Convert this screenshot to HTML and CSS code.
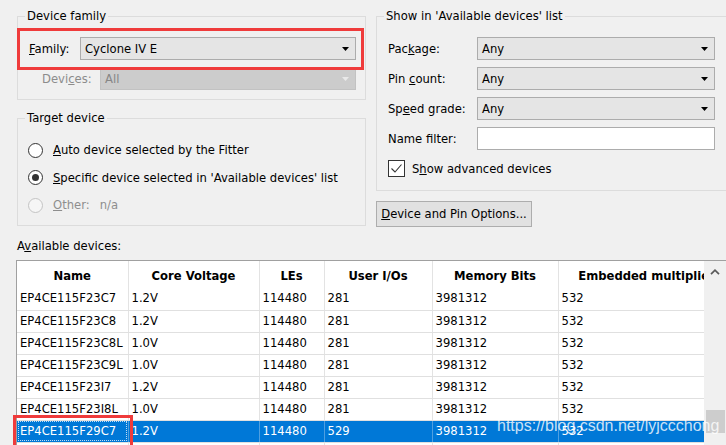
FILE: index.html
```html
<!DOCTYPE html>
<html>
<head>
<meta charset="utf-8">
<title>Device</title>
<link rel="stylesheet" href="styles.css">
</head>
<body>
<div class="page">
  <div class="top">
    <div class="left-col">
      <fieldset class="group family-group">
        <legend>Device family</legend>
        <div class="row family-row">
          <span class="lbl lbl-family"><u>F</u>amily:</span>
          <div class="combo combo-family"><span>Cyclone IV E</span><svg class="arrow" width="7" height="4" viewBox="0 0 7 4"><polygon points="0,0 7,0 3.5,4" fill="#000"/></svg></div>
        </div>
        <div class="row devices-row">
          <span class="lbl lbl-devices disabled">Devi<u>c</u>es:</span>
          <div class="combo combo-devices"><span>All</span><svg class="arrow" width="7" height="4" viewBox="0 0 7 4"><polygon points="0,0 7,0 3.5,4" fill="#e9e9e9"/></svg></div>
        </div>
      </fieldset>
      <fieldset class="group target-group">
        <legend>Target device</legend>
        <div class="radio-row"><span class="radio"></span><span><u>A</u>uto device selected by the Fitter</span></div>
        <div class="radio-row"><span class="radio checked"><span class="dot"></span></span><span><u>S</u>pecific device selected in 'Available devices' list</span></div>
        <div class="radio-row disabled"><span class="radio off"></span><span><u>O</u>ther:</span><span class="na">n/a</span></div>
      </fieldset>
    </div>
    <div class="right-col">
      <fieldset class="group show-group">
        <legend>Show in 'Available devices' list</legend>
        <div class="row rrow">
          <span class="lbl rlbl">Pac<u>k</u>age:</span>
          <div class="combo rcombo"><span>Any</span><svg class="arrow" width="7" height="4" viewBox="0 0 7 4"><polygon points="0,0 7,0 3.5,4" fill="#000"/></svg></div>
        </div>
        <div class="row rrow">
          <span class="lbl rlbl">Pin <u>c</u>ount:</span>
          <div class="combo rcombo"><span>Any</span><svg class="arrow" width="7" height="4" viewBox="0 0 7 4"><polygon points="0,0 7,0 3.5,4" fill="#000"/></svg></div>
        </div>
        <div class="row rrow">
          <span class="lbl rlbl">Sp<u>e</u>ed grade:</span>
          <div class="combo rcombo"><span>Any</span><svg class="arrow" width="7" height="4" viewBox="0 0 7 4"><polygon points="0,0 7,0 3.5,4" fill="#000"/></svg></div>
        </div>
        <div class="row rrow">
          <span class="lbl rlbl">Name filter:</span>
          <div class="textbox"></div>
        </div>
        <div class="check-row">
          <span class="checkbox"><svg width="15" height="15" viewBox="0 0 15 15"><polyline points="2.5,7.5 6,11 12.5,3.5" fill="none" stroke="#333" stroke-width="1.1"/></svg></span>
          <span>S<u>h</u>ow advanced devices</span>
        </div>
      </fieldset>
      <button class="btn" type="button"><u>D</u>evice and Pin Options...</button>
    </div>
  </div>

  <div class="avail-label">A<u>v</u>ailable devices:</div>

  <div class="list">
    <div class="list-body">
      <table class="devices">
        <colgroup>
          <col class="c-name"><col class="c-volt"><col class="c-les"><col class="c-io"><col class="c-mem"><col class="c-mult">
        </colgroup>
        <thead>
          <tr class="head"><th>Name</th><th>Core Voltage</th><th>LEs</th><th>User I/Os</th><th>Memory Bits</th><th>Embedded multipliers</th></tr>
        </thead>
        <tbody>
          <tr><td>EP4CE115F23C7</td><td>1.2V</td><td>114480</td><td>281</td><td>3981312</td><td>532</td></tr>
          <tr><td>EP4CE115F23C8</td><td>1.2V</td><td>114480</td><td>281</td><td>3981312</td><td>532</td></tr>
          <tr><td>EP4CE115F23C8L</td><td>1.0V</td><td>114480</td><td>281</td><td>3981312</td><td>532</td></tr>
          <tr><td>EP4CE115F23C9L</td><td>1.0V</td><td>114480</td><td>281</td><td>3981312</td><td>532</td></tr>
          <tr><td>EP4CE115F23I7</td><td>1.2V</td><td>114480</td><td>281</td><td>3981312</td><td>532</td></tr>
          <tr><td>EP4CE115F23I8L</td><td>1.0V</td><td>114480</td><td>281</td><td>3981312</td><td>532</td></tr>
          <tr class="sel"><td class="focus">EP4CE115F29C7</td><td>1.2V</td><td>114480</td><td>529</td><td>3981312</td><td>532</td></tr>
          <tr class="blank"><td></td><td></td><td></td><td></td><td></td><td></td></tr>
        </tbody>
      </table>
    </div>
    <div class="scrollbar">
      <div class="sb-up"><svg width="10" height="6" viewBox="0 0 10 6"><polyline points="1,5.2 5,1.2 9,5.2" fill="none" stroke="#5a5a5a" stroke-width="1.7"/></svg></div>
      <div class="sb-thumb"></div>
    </div>
  </div>

  <div class="annot annot-family"></div>
  <div class="annot annot-cell"></div>
  <div class="watermark">https://blog.csdn.net/lyjccchong</div>
</div>
</body>
</html>
```

FILE: styles.css
```css
* { box-sizing: border-box; }

html, body {
  margin: 0;
  padding: 0;
}

body {
  background: #f0f0f0;
  font-family: "DejaVu Sans", Verdana, sans-serif;
  font-size: 11.6px;
  color: #000;
  width: 726px;
  height: 445px;
  overflow: hidden;
}

.page {
  position: relative;
  padding: 9px 0 0 17px;
  height: 445px;
}

.top {
  display: flex;
  align-items: flex-start;
}

.left-col {
  width: 349px;
  flex: none;
  display: flex;
  flex-direction: column;
  gap: 11px;
}

.group {
  margin: 0;
  padding: 0;
  border: 1px solid #dcdcdc;
  min-width: 0;
}

.group legend {
  margin-left: 7px;
  padding: 0 2px;
  line-height: 14px;
  height: 14px;
}

.family-group { padding: 14px 0 9px; }

.row {
  display: flex;
  align-items: center;
  height: 23px;
}

.row + .row { margin-top: 7px; }

.lbl { white-space: nowrap; }

.disabled { color: #8c8c8c; }

.lbl-family {
  margin-left: 11px;
  width: 51px;
}

.devices-row { padding-left: 24px; }
.lbl-devices { width: 58px; }

.combo {
  height: 23px;
  background: #e5e5e5;
  border: 1px solid #acacac;
  display: flex;
  align-items: center;
  justify-content: space-between;
  padding: 0 6px 0 4px;
  flex: none;
}

.combo-family { width: 276px; }

.combo-devices {
  width: 256px;
  background: #cccccc;
  border-color: #c2c2c2;
  color: #868686;
}

.arrow { display: block; }

.target-group { padding: 15px 0 10px; }

.radio-row {
  display: flex;
  align-items: center;
  height: 20px;
  padding-left: 10px;
  white-space: nowrap;
}

.radio-row + .radio-row { margin-top: 7.5px; }

.radio {
  width: 15px;
  height: 15px;
  border-radius: 50%;
  border: 1px solid #333;
  background: #fff;
  margin-right: 10px;
  display: flex;
  align-items: center;
  justify-content: center;
  flex: none;
}

.radio .dot {
  width: 7px;
  height: 7px;
  border-radius: 50%;
  background: #333;
}

.radio.off {
  border-color: #c4c4c4;
  background: #f6f6f6;
}

.radio-row.disabled { color: #8e8e8e; }
.na { margin-left: 10px; }

.right-col {
  margin-left: 10px;
  width: 360px;
  flex: none;
}

.show-group { padding: 14px 0 13px; }

.rrow { padding-left: 11px; }
.rlbl { width: 89px; }
.rcombo { width: 238px; }

.textbox {
  width: 238px;
  height: 23px;
  background: #fff;
  border: 1px solid #acacac;
}

.check-row {
  display: flex;
  align-items: center;
  height: 17px;
  margin-top: 10px;
  padding-left: 11px;
}

.checkbox {
  width: 17px;
  height: 17px;
  border: 1px solid #333;
  background: #fff;
  margin-right: 7px;
  display: flex;
  align-items: center;
  justify-content: center;
}

.checkbox svg { display: block; }

.btn {
  display: block;
  margin-top: 10px;
  width: 156px;
  height: 26px;
  background: #e1e1e1;
  border: 1px solid #adadad;
  padding: 0;
  font: inherit;
  color: #000;
  text-align: center;
}

.avail-label {
  margin-top: 12px;
  line-height: 14px;
  height: 14px;
  margin-bottom: 7px;
}

.list {
  display: flex;
  margin-left: -1px;
  width: 720px;
  height: 200px;
  border-top: 1px solid #a0a0a0;
  border-left: 1px solid #a0a0a0;
}

.list-body {
  width: 687px;
  flex: none;
  overflow: hidden;
  background: #fff;
}

.devices {
  table-layout: fixed;
  border-collapse: collapse;
  width: 725px;
}

.c-name { width: 111px; }
.c-volt { width: 131px; }
.c-les { width: 65px; }
.c-io { width: 108px; }
.c-mem { width: 126px; }
.c-mult { width: 184px; }

.head { height: 27px; }

th {
  padding: 3px 3px 0;
  line-height: 24px;
  font-weight: bold;
  text-align: center;
  border-right: 1px solid #e3e3e3;
  white-space: nowrap;
  overflow: hidden;
}

tbody tr { height: 22px; }

td {
  padding: 0 3px;
  line-height: 21px;
  border-right: 1px solid #e3e3e3;
  border-bottom: 1px solid #e0e0e0;
  white-space: nowrap;
  overflow: hidden;
}

tr.sel td {
  background: #0078d7;
  color: #fff;
  border-right-color: #4f9fe0;
}

tr.sel td.focus {
  outline: 1px dotted rgba(255, 255, 255, 0.75);
  outline-offset: -2px;
}

.scrollbar {
  width: 22px;
  flex: none;
  background: #f0f0f0;
}

.sb-up {
  height: 22px;
  display: flex;
  align-items: center;
  justify-content: center;
}

.sb-up svg { display: block; }

.sb-thumb {
  margin: 127px 0 0 2px;
  width: 19px;
  height: 23px;
  background: #cdcdcd;
}

.annot {
  position: absolute;
  border: 3px solid #ef3b3b;
  pointer-events: none;
}

.annot-family {
  left: 17px;
  top: 28px;
  width: 347px;
  height: 42px;
}

.annot-cell {
  left: 13px;
  top: 415px;
  width: 120px;
  height: 40px;
}

.watermark {
  position: absolute;
  left: 497px;
  top: 417px;
  font-family: "Liberation Sans", Arial, sans-serif;
  font-size: 16px;
  line-height: 18px;
  color: rgba(255, 255, 255, 0.8);
  white-space: nowrap;
}
```
